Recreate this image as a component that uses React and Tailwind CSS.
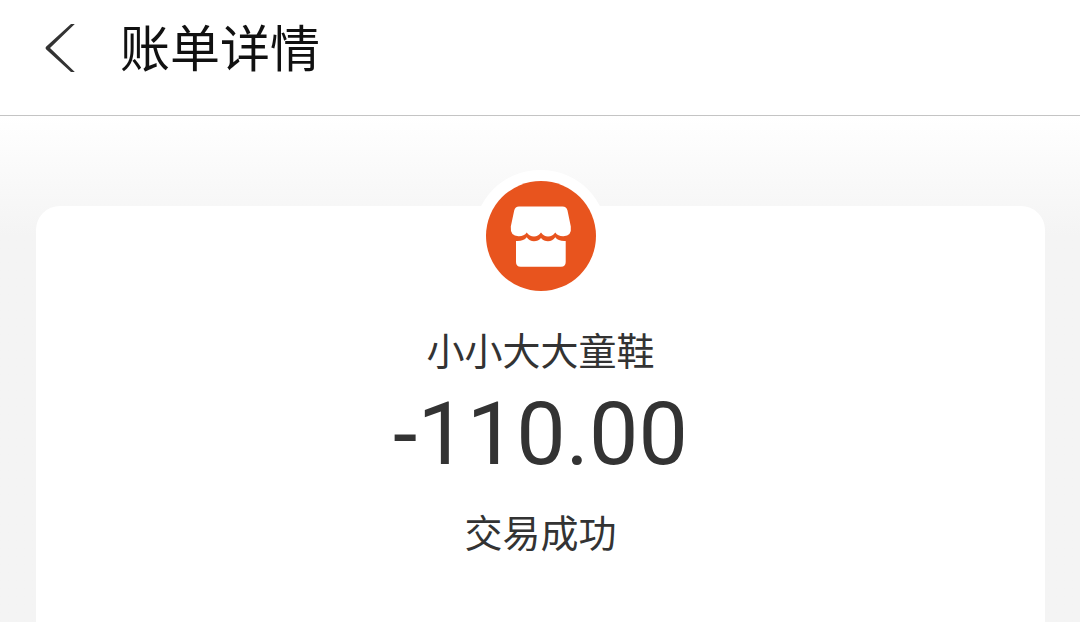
export default function App() {
  return (
    <div className="flex min-h-screen flex-col bg-[#f4f4f4] font-['Roboto','Noto_Sans_CJK_SC',sans-serif] text-[#333333]">
      <header className="flex h-29 items-start gap-9 border-b border-[#c4c4c4] bg-white px-9 pt-3">
        <button type="button" aria-label="返回" className="flex h-18 w-12 items-center justify-center">
          <svg width="48" height="72" viewBox="0 0 48 72" fill="#333333">
            <path d="M35 12H38.8L14 36L38.8 60H35L10 37.2Q9 36 10 34.8Z" />
          </svg>
        </button>
        <h1 className="pt-0.5 text-[50px] leading-18 text-[#111111]">账单详情</h1>
      </header>
      <main className="flex grow flex-col bg-linear-to-b from-white to-[#f4f4f4] to-[120px] pt-[90px] pr-[35px] pl-9">
        <section className="flex grow flex-col items-center rounded-t-3xl bg-white">
          <div className="-mt-9 rounded-full bg-white p-[11px]">
            <svg width="111" height="110" viewBox="-1 0 111 110">
              <circle cx="55" cy="55" r="55" fill="#e8541e" />
              <path
                d="M33 25.5H76.5Q80.5 25.5 81.5 29.5L84.8 45.5Q86 55 77.5 55.3Q72 55.5 69.3 51.5Q66.5 55.5 62 55.5Q57.8 55.5 55 51.5Q52.2 55.5 48 55.5Q43.5 55.5 40.7 51.5Q38 55.5 32.5 55.3Q24 55 24.8 45.5L28.2 29.5Q29.2 25.5 33 25.5Z"
                fill="#fff"
              />
              <path
                d="M30 60Q37.5 60.5 40.7 56.3Q43.5 60.3 48 60.3Q52.2 60.3 55 57Q57.8 60.3 62 60.3Q66.5 60.3 69.3 56.3Q72.5 60.5 79.7 60V81Q79.7 85.7 75 85.7H34.7Q30 85.7 30 81Z"
                fill="#fff"
              />
            </svg>
          </div>
          <h2 className="mt-[22px] text-[38px] leading-14">小小大大童鞋</h2>
          <p className="text-[88px] leading-[108px]">-110.00</p>
          <p className="mt-[18px] text-[38px] leading-14">交易成功</p>
        </section>
      </main>
    </div>
  );
}
